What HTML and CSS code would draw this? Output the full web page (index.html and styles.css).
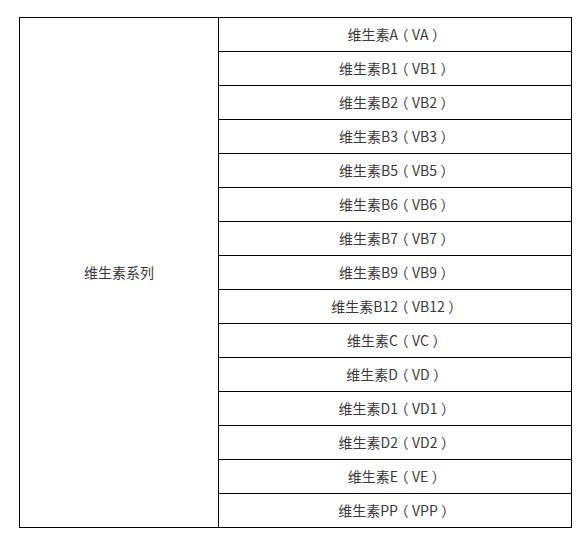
FILE: index.html
```html
<!DOCTYPE html>
<html lang="zh-CN">
<head>
<meta charset="utf-8">
<title>维生素系列</title>
<link rel="stylesheet" href="styles.css">
</head>
<body>
<table class="vt">
  <tbody>
    <tr><td class="group" rowspan="15">维生素系列</td><td class="item">维生素A<span class="pr">（</span>VA<span class="pr">）</span></td></tr>
    <tr><td class="item">维生素B1<span class="pr">（</span>VB1<span class="pr">）</span></td></tr>
    <tr><td class="item">维生素B2<span class="pr">（</span>VB2<span class="pr">）</span></td></tr>
    <tr><td class="item">维生素B3<span class="pr">（</span>VB3<span class="pr">）</span></td></tr>
    <tr><td class="item">维生素B5<span class="pr">（</span>VB5<span class="pr">）</span></td></tr>
    <tr><td class="item">维生素B6<span class="pr">（</span>VB6<span class="pr">）</span></td></tr>
    <tr><td class="item">维生素B7<span class="pr">（</span>VB7<span class="pr">）</span></td></tr>
    <tr><td class="item">维生素B9<span class="pr">（</span>VB9<span class="pr">）</span></td></tr>
    <tr><td class="item">维生素B12<span class="pr">（</span>VB12<span class="pr">）</span></td></tr>
    <tr><td class="item">维生素C<span class="pr">（</span>VC<span class="pr">）</span></td></tr>
    <tr><td class="item">维生素D<span class="pr">（</span>VD<span class="pr">）</span></td></tr>
    <tr><td class="item">维生素D1<span class="pr">（</span>VD1<span class="pr">）</span></td></tr>
    <tr><td class="item">维生素D2<span class="pr">（</span>VD2<span class="pr">）</span></td></tr>
    <tr><td class="item">维生素E<span class="pr">（</span>VE<span class="pr">）</span></td></tr>
    <tr><td class="item">维生素PP<span class="pr">（</span>VPP<span class="pr">）</span></td></tr>
  </tbody>
</table>
</body>
</html>
```
FILE: styles.css
```css
html, body {
  margin: 0;
  background: #fff;
}
body {
  padding: 17px 0 0 19px;
  font-family: "Noto Sans CJK SC", "Noto Sans", sans-serif;
  font-size: 14px;
  color: #3a3a3a;
}
.vt {
  border-collapse: collapse;
  table-layout: fixed;
  width: 553px;
}
.vt td {
  border: 1px solid #000;
  padding: 0 0 2px;
  text-align: center;
  vertical-align: middle;
  line-height: 20px;
}
.vt .group {
  width: 198px;
}
.vt .item {
  height: 31px;
}
.pr {
  font-feature-settings: "halt" 1;
  padding: 0 3.5px;
}
```
